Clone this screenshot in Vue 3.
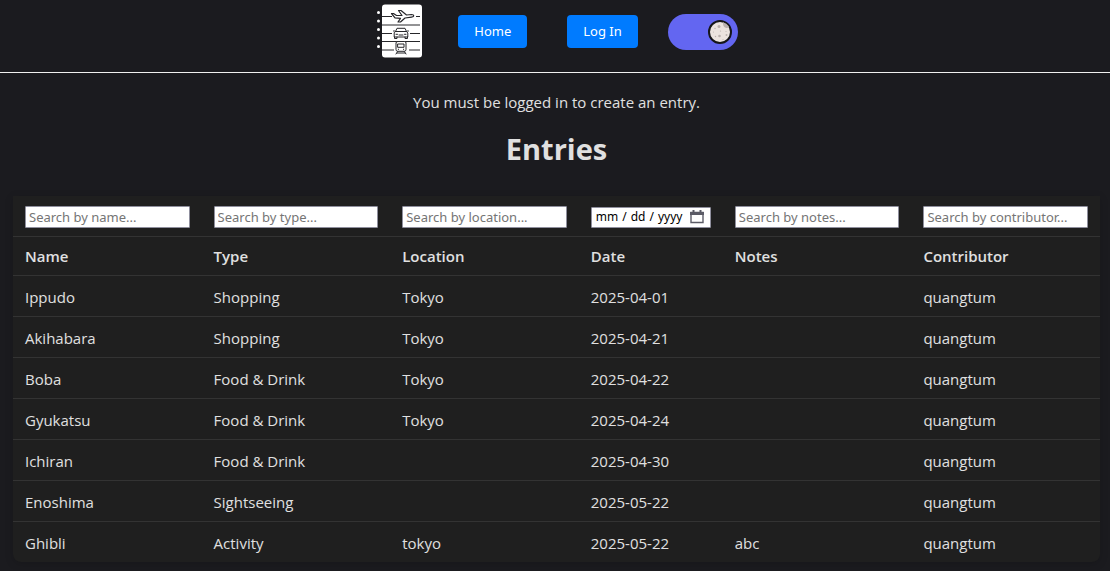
<script setup>
import { computed, reactive, ref } from 'vue'

const dark = ref(true)

const columns = [
  { key: 'name', label: 'Name', type: 'text', hint: 'Search by name...' },
  { key: 'type', label: 'Type', type: 'text', hint: 'Search by type...' },
  { key: 'location', label: 'Location', type: 'text', hint: 'Search by location...' },
  { key: 'date', label: 'Date', type: 'date', hint: '' },
  { key: 'notes', label: 'Notes', type: 'text', hint: 'Search by notes...' },
  { key: 'contributor', label: 'Contributor', type: 'text', hint: 'Search by contributor...' },
]

const entries = [
  { name: 'Ippudo', type: 'Shopping', location: 'Tokyo', date: '2025-04-01', notes: '', contributor: 'quangtum' },
  { name: 'Akihabara', type: 'Shopping', location: 'Tokyo', date: '2025-04-21', notes: '', contributor: 'quangtum' },
  { name: 'Boba', type: 'Food & Drink', location: 'Tokyo', date: '2025-04-22', notes: '', contributor: 'quangtum' },
  { name: 'Gyukatsu', type: 'Food & Drink', location: 'Tokyo', date: '2025-04-24', notes: '', contributor: 'quangtum' },
  { name: 'Ichiran', type: 'Food & Drink', location: '', date: '2025-04-30', notes: '', contributor: 'quangtum' },
  { name: 'Enoshima', type: 'Sightseeing', location: '', date: '2025-05-22', notes: '', contributor: 'quangtum' },
  { name: 'Ghibli', type: 'Activity', location: 'tokyo', date: '2025-05-22', notes: 'abc', contributor: 'quangtum' },
]

const filters = reactive({ name: '', type: '', location: '', date: '', notes: '', contributor: '' })

const visible = computed(() =>
  entries.filter((entry) =>
    columns.every(({ key }) => entry[key].toLowerCase().includes(filters[key].toLowerCase())),
  ),
)
</script>

<template>
  <div class="page">
    <header class="bar">
      <svg class="logo" viewBox="0 0 46 54" role="img" aria-label="Travel notebook">
        <rect x="6" y="0.5" width="40" height="53" rx="3" fill="#fff" />
        <g fill="#fff">
          <circle cx="2.5" cy="8.5" r="1.5" /><circle cx="2.5" cy="17" r="1.5" /><circle cx="2.5" cy="25.5" r="1.5" />
          <circle cx="2.5" cy="34" r="1.5" /><circle cx="2.5" cy="42.5" r="1.5" />
        </g>
        <g fill="none" stroke="#26262a" stroke-width="1">
          <path d="M6 12.5H16M40 12.5H44M6 21H44M6 29.5H16M34 29.5H44M6 37.5H44M6 46H18M33 46H44" />
          <g stroke-linejoin="round" stroke-linecap="round" fill="#fff">
            <path stroke-width="1.2" d="M15.5 9.5L17.5 9.5 20.5 11.5H26L22.5 6.5H25L30.5 11 35.5 10.5C38.5 10.6 38.5 12.8 35.5 13.2L29 14 24.5 18H22L24.5 14.3 19 13.8Z" />
            <path d="M19.5 27.5L21 24.3H29L30.5 27.5L31.8 29V33H18.2V29ZM19.5 27.5H30.5M18.5 33V34.5H21V33M29 33V34.5H31.5V33M17.5 27H18.5M31.5 27H32.5M20 30.3H21.5M28.5 30.3H30M23 31H27" />
            <path d="M21.5 37.5H28.5Q30 37.5 30 39V45.5Q30 47.3 28.3 47.3H21.7Q20 47.3 20 45.5V39Q20 37.5 21.5 37.5ZM22 40H28V43.3H22ZM22.3 45.3H22.6M27.4 45.3H27.7M21.7 47.5L20 50M28.3 47.5L30 50M21 49H29" />
          </g>
        </g>
      </svg>
      <nav class="links" aria-label="Main">
        <button type="button" class="btn">Home</button>
        <button type="button" class="btn">Log In</button>
      </nav>
      <label class="toggle">
        <input v-model="dark" type="checkbox" class="toggle-box" aria-label="Dark mode" />
        <svg class="moon" viewBox="0 0 24 24" aria-hidden="true">
          <circle cx="12" cy="12" r="11" fill="#ece3df" stroke="#161619" stroke-width="2" />
          <g fill="#bbb1ae">
            <path d="M15 2.3Q14.5 7 18.2 8 20.5 8 21 6.5 18.5 3.2 15 2.3Z" />
            <circle cx="11" cy="6.5" r="1.5" /><circle cx="7" cy="8.5" r=".7" /><circle cx="11.5" cy="16" r="1.3" />
            <circle cx="18.5" cy="15" r="1" /><circle cx="12.5" cy="11" r=".6" /><circle cx="7.5" cy="16.5" r=".7" />
            <circle cx="18" cy="11.5" r=".5" /><circle cx="5.5" cy="12" r=".5" /><circle cx="15" cy="19.5" r=".5" />
          </g>
        </svg>
      </label>
    </header>

    <main class="content">
      <p class="notice">You must be logged in to create an entry.</p>
      <h1 class="title">Entries</h1>
      <table class="entries">
        <colgroup>
          <col v-for="col in columns" :key="col.key" :class="{ 'date-col': col.type === 'date' }" />
        </colgroup>
        <thead>
          <tr class="filters">
            <td v-for="col in columns" :key="col.key">
              <input
                v-model="filters[col.key]"
                class="field"
                :type="col.type"
                :placeholder="col.hint"
                :aria-label="`Search by ${col.key}`"
              />
            </td>
          </tr>
          <tr class="heads">
            <th v-for="col in columns" :key="col.key" scope="col">{{ col.label }}</th>
          </tr>
        </thead>
        <tbody>
          <tr v-for="entry in visible" :key="entry.name">
            <td v-for="col in columns" :key="col.key">{{ entry[col.key] }}</td>
          </tr>
        </tbody>
      </table>
    </main>
  </div>
</template>

<style>
body {
  margin: 0;
  background: #1b1b1f;
}
</style>

<style scoped>
.page {
  color: #e0e0e0;
  font: 15px/24px "Segoe UI", "Open Sans", sans-serif;
}
.bar {
  box-sizing: border-box;
  display: flex;
  justify-content: center;
  align-items: flex-start;
  padding: 4px 0 14px 4px;
  border-bottom: 1px solid #f0f0f0;
}
.logo {
  width: 46px;
  height: 54px;
}
.links {
  display: flex;
  gap: 40px;
  margin: 11px 30px 0 36px;
}
.btn {
  padding: 0 16px;
  border: 0;
  border-radius: 4px;
  background: #007bff;
  color: #fff;
  font: 13px/33px "Noto Sans", sans-serif;
  cursor: pointer;
}
.toggle {
  box-sizing: border-box;
  display: flex;
  justify-content: flex-end;
  align-items: center;
  width: 70px;
  height: 36px;
  margin-top: 10px;
  padding: 0 6px;
  border-radius: 18px;
  background: #6366f1;
  cursor: pointer;
}
.toggle:not(:has(:checked)) {
  justify-content: flex-start;
}
.toggle-box {
  appearance: none;
  width: 0;
  height: 0;
  margin: 0;
}
.moon {
  width: 24px;
  height: 24px;
}
.content {
  padding: 17px 10px 8px 13px;
}
.notice {
  margin: 0;
  text-align: center;
}
.title {
  margin: 13px 0 25px;
  font-size: 29px;
  line-height: 44px;
  text-align: center;
}
.entries {
  width: 100%;
  table-layout: fixed;
  border-spacing: 0;
  border-radius: 0 0 8px 8px;
  overflow: hidden;
  background: #1f1f1f;
  box-shadow: 0 2px 8px rgba(0, 0, 0, 0.15);
}
.date-col {
  width: 144px;
}
.entries td,
.entries th {
  padding: 9px 12px 7px;
  border-bottom: 1px solid #333;
  text-align: left;
  vertical-align: middle;
}
.entries .heads th {
  padding: 7px 12px;
  font-weight: 600;
}
.entries .filters td {
  height: 24px;
}
.entries tbody tr:last-child td {
  border-bottom: 0;
}
.field {
  box-sizing: border-box;
  display: block;
  width: 100%;
  height: 22px;
  padding: 1px 3px;
  border: 1px solid #8f8f9d;
  border-radius: 1px;
  background: #fff;
  color: #000;
  color-scheme: light;
  font: 13px/18px "Noto Sans", sans-serif;
}
.field::placeholder {
  color: #757575;
}
.field[type="date"] {
  height: 21px;
  font-size: 12px;
}
.field::-webkit-datetime-edit-text {
  padding: 0 3px;
}
.field::-webkit-calendar-picker-indicator {
  width: 14px;
  height: 14px;
  margin: 0 3px 0 0;
  padding: 0;
  background: url("data:image/svg+xml,%3Csvg xmlns='http://www.w3.org/2000/svg' viewBox='0 0 14 14'%3E%3Cpath d='M1 2.5h12v10H1z' fill='none' stroke='%235b5b66' stroke-width='1.4'/%3E%3Cpath d='M0 2h14v3H0zM2.5 0h2v3h-2zM9.5 0h2v3h-2z' fill='%235b5b66'/%3E%3C/svg%3E") center / 14px 14px no-repeat;
}
</style>
